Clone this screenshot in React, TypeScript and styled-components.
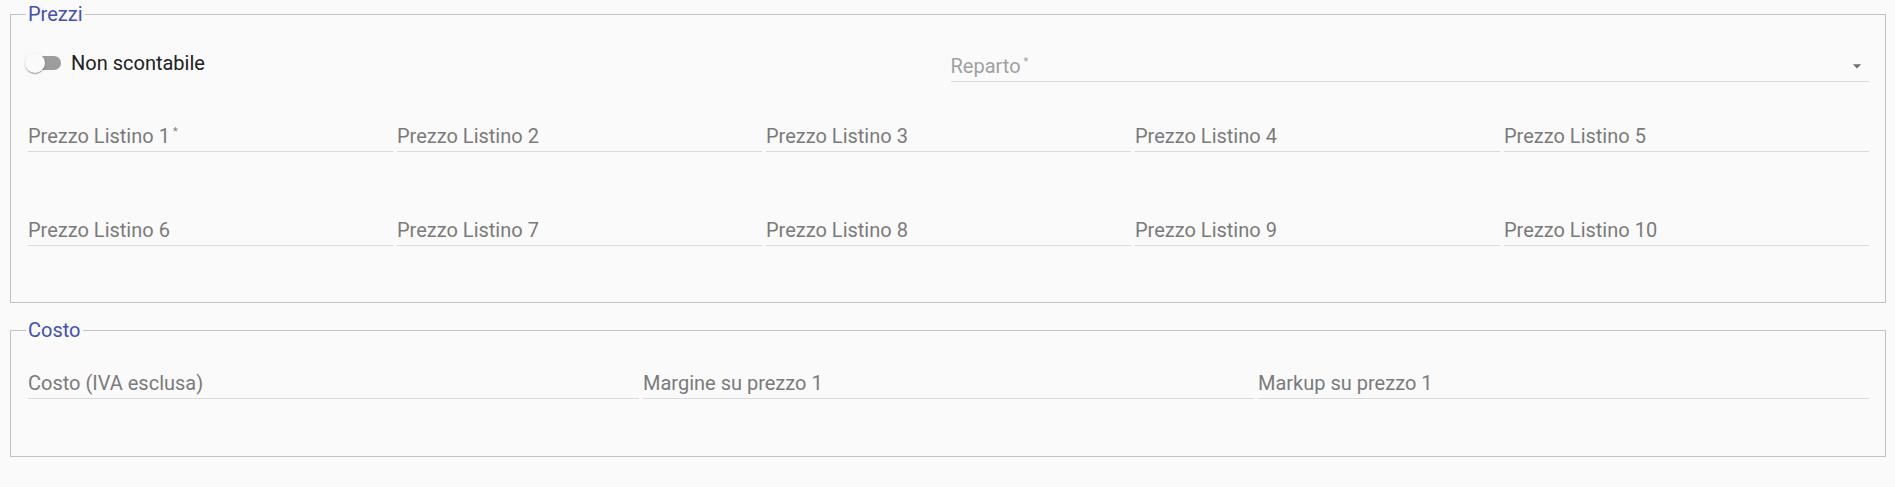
import React, { FC } from "react";
import styled, { createGlobalStyle } from "styled-components";

const GlobalStyle = createGlobalStyle`
  html, body {
    margin: 0;
    padding: 0;
    background: #fafafa;
  }
`;

const Page = styled.div`
  box-sizing: border-box;
  min-height: 100vh;
  padding: 2px 9px 0 10px;
  font-family: Roboto, "Helvetica Neue", Arial, sans-serif;
  background: #fafafa;
`;

const Group = styled.fieldset<{ $padTop: number; $padBottom: number }>`
  min-width: 0;
  margin: 0;
  padding: ${(p) => p.$padTop}px 16px ${(p) => p.$padBottom}px 17px;
  border: 1px solid #c2c2c2;

  & + & {
    margin-top: 15px;
  }
`;

const Legend = styled.legend`
  margin-left: -2px;
  padding: 0 2px;
  font-size: 20px;
  line-height: 24px;
  color: #3f51b5;
`;

const Row = styled.div<{ $cols: number; $top?: number }>`
  display: grid;
  grid-template-columns: repeat(${(p) => p.$cols}, minmax(0, 1fr));
  column-gap: 4px;
  align-items: start;
  margin-top: ${(p) => p.$top ?? 0}px;
`;

const Field = styled.div<{ $top?: number }>`
  position: relative;
  margin-top: ${(p) => p.$top ?? 0}px;
  padding-bottom: 3px;
  border-bottom: 1px solid #dadada;
`;

const FieldLabel = styled.span<{ $muted?: boolean }>`
  display: block;
  height: 24px;
  font-size: 20px;
  line-height: 24px;
  color: ${(p) => (p.$muted ? "#a1a1a1" : "#7a7a7a")};
  white-space: nowrap;
`;

const Req = styled.span`
  position: relative;
  top: -8px;
  margin-left: 3px;
  font-size: 11px;
  line-height: 1;
`;

const SelectArrow = styled.svg`
  position: absolute;
  top: 2px;
  right: 2px;
  width: 20px;
  height: 20px;
  fill: #6f6f6f;
`;

const SwitchRow = styled.label`
  display: flex;
  align-items: center;
  height: 24px;
`;

const Track = styled.span`
  position: relative;
  flex: none;
  width: 34px;
  height: 14px;
  margin-left: -1px;
  border-radius: 7px;
  background: #9c9c9c;
`;

const Thumb = styled.span`
  position: absolute;
  top: -3px;
  left: -2px;
  width: 20px;
  height: 20px;
  border-radius: 50%;
  background: #fafafa;
  box-shadow: 0 2px 1px -1px rgba(0, 0, 0, 0.2), 0 1px 1px 0 rgba(0, 0, 0, 0.14),
    0 1px 3px 0 rgba(0, 0, 0, 0.12);
`;

const SwitchText = styled.span`
  margin-left: 10px;
  font-size: 20px;
  line-height: 24px;
  color: #212121;
`;

const TextField: FC<{ label: string; required?: boolean; muted?: boolean; select?: boolean; top?: number }> = ({
  label,
  required,
  muted,
  select,
  top,
}) => (
  <Field $top={top}>
    <FieldLabel $muted={muted}>
      {label}
      {required && <Req>*</Req>}
    </FieldLabel>
    {select && (
      <SelectArrow viewBox="0 0 24 24">
        <path d="M7 10l5 5 5-5z" />
      </SelectArrow>
    )}
  </Field>
);

const listini = Array.from({ length: 10 }, (_, i) => i + 1);

const App: FC = () => (
  <Page>
    <GlobalStyle />
    <Group $padTop={25} $padBottom={56}>
      <Legend>Prezzi</Legend>
      <Row $cols={2}>
        <SwitchRow>
          <Track>
            <Thumb />
          </Track>
          <SwitchText>Non scontabile</SwitchText>
        </SwitchRow>
        <TextField label="Reparto" required muted select top={3} />
      </Row>
      <Row $cols={5} $top={42}>
        {listini.slice(0, 5).map((n) => (
          <TextField key={n} label={`Prezzo Listino ${n}`} required={n === 1} />
        ))}
      </Row>
      <Row $cols={5} $top={66}>
        {listini.slice(5).map((n) => (
          <TextField key={n} label={`Prezzo Listino ${n}`} />
        ))}
      </Row>
    </Group>
    <Group $padTop={29} $padBottom={57}>
      <Legend>Costo</Legend>
      <Row $cols={3}>
        <TextField label="Costo (IVA esclusa)" />
        <TextField label="Margine su prezzo 1" />
        <TextField label="Markup su prezzo 1" />
      </Row>
    </Group>
  </Page>
);

export default App;
